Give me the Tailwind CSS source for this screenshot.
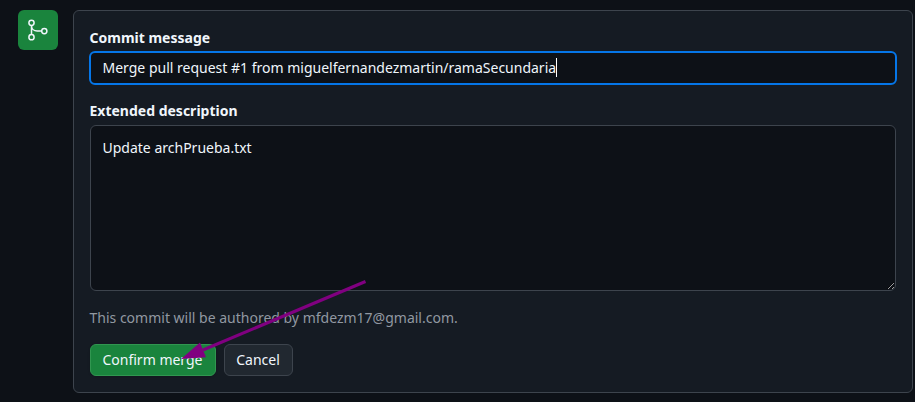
<!DOCTYPE html>
<html lang="en">
<head>
<meta charset="utf-8">
<title>Confirm merge</title>
<script src="https://cdn.jsdelivr.net/npm/@tailwindcss/browser@4"></script>
</head>
<body class="relative flex h-[402px] w-[915px] items-start overflow-hidden bg-[#0d1117] pt-[10px] pl-[18px] font-['Noto_Sans',sans-serif] text-sm leading-[21px] text-[#f0f6fc]">
  <div class="flex size-10 shrink-0 items-center justify-center rounded-md bg-[#1a843d]">
    <svg class="size-6" viewBox="0 0 24 24" fill="none" stroke="#f0f6fc" stroke-width="1.5">
      <circle cx="5.5" cy="4.8" r="2.600"/>
      <circle cx="5.5" cy="19.200" r="2.600"/>
      <circle cx="18.3" cy="13.1" r="2.600"/>
      <path d="M5.500 7.500v9M5.500 7.500c0 3.300 2.500 5.600 5.700 5.600h4.500"/>
    </svg>
  </div>
  <main class="ml-[15px] flex h-[383px] w-[840px] shrink-0 flex-col items-start rounded-md border border-[#3d444d] bg-[#151b23] px-4 pt-4">
    <label for="message" class="-ml-[0.5px] h-6 font-bold">Commit message</label>
    <div class="-ml-px flex h-[34px] w-[808px] items-center rounded-md border-2 border-[#0576e8] bg-[#0d1117] pb-px pl-[11.5px]">
      <span id="message">Merge pull request #1 from miguelfernandezmartin/ramaSecundaria</span><span class="-ml-[0.5px] h-[19px] w-px bg-white"></span>
    </div>
    <label for="description" class="mt-[15px] -ml-[0.5px] h-[25px] font-bold">Extended description</label>
    <textarea id="description" class="block h-[166px] w-[806px] shrink-0 resize-y rounded-md border border-[#3d444d] bg-[#0d1117] px-[11.5px] pt-[11px] outline-none [color-scheme:dark]">Update archPrueba.txt</textarea>
    <p class="mt-4 -ml-[0.5px] text-[#9198a1]">This commit will be authored by mfdezm17@gmail.com.</p>
    <div class="mt-4 flex gap-2">
      <button class="h-8 w-[126px] rounded-md border border-[#319650] bg-[#1a843d] pr-px pb-0.5 shadow-sm">Confirm merge</button>
      <button class="h-8 w-[69px] rounded-md border border-[#3d444d] bg-[#212830] pr-px pb-0.5">Cancel</button>
    </div>
  </main>
  <svg class="pointer-events-none absolute top-0 left-0" width="915" height="402" viewBox="0 0 915 402">
    <path d="M365.500 281.500L203 350" fill="none" stroke="#800080" stroke-width="3"/>
    <path d="M181 359L200 342.500L206 357.300Z" fill="#800080"/>
  </svg>
</body>
</html>
